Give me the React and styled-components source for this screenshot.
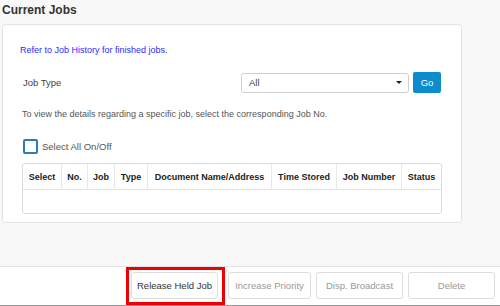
import styled, { createGlobalStyle } from "styled-components";

const GlobalStyle = createGlobalStyle`
  body {
    margin: 0;
    font-family: "Liberation Sans", Arial, sans-serif;
    background: #fff;
  }
`;

const Page = styled.div`
  width: 500px;
  height: 306px;
  display: flex;
  flex-direction: column;
  overflow: hidden;
`;

const Main = styled.div`
  height: 266px;
  background: #f8f8f8;
  padding: 0 0 0 2px;
  box-sizing: border-box;
`;

const Title = styled.h2`
  margin: 0;
  height: 24px;
  padding-top: 3px;
  box-sizing: border-box;
  font-size: 12px;
  font-weight: bold;
  color: #333;
`;

const Card = styled.div`
  width: 460px;
  height: 199px;
  box-sizing: border-box;
  background: #fff;
  border: 1px solid #e4e4e4;
  border-radius: 3px;
  padding: 19px 19px 0 19px;
`;

const HistoryLink = styled.div`
  margin-left: -2px;
  height: 12px;
  line-height: 12px;
  font-size: 9px;
  color: #2a2aff;
`;

const TypeRow = styled.div`
  display: flex;
  align-items: center;
  margin-top: 16px;
  height: 21px;
`;

const Label = styled.div`
  width: 218px;
  font-size: 9.5px;
  color: #444;
  padding-left: 1px;
`;

const Select = styled.div`
  width: 168px;
  height: 20px;
  box-sizing: border-box;
  border: 1px solid #cfcfcf;
  border-radius: 3px;
  display: flex;
  align-items: center;
  justify-content: space-between;
  padding: 0 6px 0 7px;
  font-size: 9.5px;
  color: #444;
`;

const Caret = styled.span`
  width: 0;
  height: 0;
  border-left: 3px solid transparent;
  border-right: 3px solid transparent;
  border-top: 3px solid #222;
`;

const GoButton = styled.button`
  margin-left: 4px;
  width: 28px;
  height: 21px;
  border: 0;
  border-radius: 2px;
  background: #0c8ccc;
  color: #fff;
  font-family: inherit;
  font-size: 9.5px;
  padding: 0;
`;

const Hint = styled.div`
  margin-top: 15px;
  height: 12px;
  line-height: 12px;
  font-size: 9px;
  color: #555;
`;

const CheckRow = styled.label`
  display: flex;
  align-items: center;
  gap: 4px;
  margin-top: 19px;
  margin-left: 1px;
  font-size: 9.5px;
  color: #555;
`;

const Box = styled.span`
  width: 15px;
  height: 15px;
  box-sizing: border-box;
  border: 2px solid #2f79b4;
  border-radius: 2px;
  background: #fff;
`;

const Table = styled.table`
  margin-top: 9px;
  width: 420px;
  border-collapse: separate;
  border-spacing: 0;
  border: 1px solid #dcdcdc;
  border-radius: 3px;
  table-layout: fixed;
`;

const Th = styled.th`
  height: 25px;
  padding: 0;
  font-size: 9px;
  font-weight: bold;
  color: #222;
  text-align: center;
  border-bottom: 1px solid #e4e4e4;
  border-left: ${(p) => (p.$first ? "0" : "1px solid #e8e8e8")};
  white-space: nowrap;
`;

const Td = styled.td`
  height: 23px;
  padding: 0;
`;

const Footer = styled.div`
  height: 40px;
  box-sizing: border-box;
  border-top: 1px solid #e2e2e2;
  border-bottom: 1px solid #9a9a9a;
  background: #fff;
  display: flex;
  align-items: flex-start;
  justify-content: flex-end;
  gap: 5px;
  padding-right: 5px;
`;

const Highlight = styled.div`
  height: 38px;
  box-sizing: border-box;
  border: 3px solid #f00000;
  padding: 2px 4px 0 2px;
  margin-right: -2px;
`;

const FooterButton = styled.button`
  margin-top: ${(p) => (p.$inBox ? "0" : "5px")};
  width: ${(p) => p.$w}px;
  height: 27px;
  box-sizing: border-box;
  background: #fff;
  border: 1px solid #dedede;
  border-radius: 3px;
  font-family: inherit;
  font-size: 9.5px;
  color: ${(p) => (p.disabled ? "#999" : "#333")};
  padding: 0;
`;

const columns = [
  ["Select", 38],
  ["No.", 26],
  ["Job", 27],
  ["Type", 33],
  ["Document Name/Address", 124],
  ["Time Stored", 65],
  ["Job Number", 65],
  ["Status", 40],
];

export default function App() {
  return (
    <Page>
      <GlobalStyle />
      <Main>
        <Title>Current Jobs</Title>
        <Card>
          <HistoryLink>Refer to Job History for finished jobs.</HistoryLink>
          <TypeRow>
            <Label>Job Type</Label>
            <Select>
              <span>All</span>
              <Caret />
            </Select>
            <GoButton>Go</GoButton>
          </TypeRow>
          <Hint>
            To view the details regarding a specific job, select the
            corresponding Job No.
          </Hint>
          <CheckRow>
            <Box />
            Select All On/Off
          </CheckRow>
          <Table>
            <colgroup>
              {columns.map(([name, w]) => (
                <col key={name} style={{ width: w }} />
              ))}
            </colgroup>
            <thead>
              <tr>
                {columns.map(([name], i) => (
                  <Th key={name} $first={i === 0}>
                    {name}
                  </Th>
                ))}
              </tr>
            </thead>
            <tbody>
              <tr>
                <Td colSpan={8} />
              </tr>
            </tbody>
          </Table>
        </Card>
      </Main>
      <Footer>
        <Highlight>
          <FooterButton $inBox $w={87}>
            Release Held Job
          </FooterButton>
        </Highlight>
        <FooterButton disabled $w={83}>
          Increase Priority
        </FooterButton>
        <FooterButton disabled $w={87}>
          Disp. Broadcast
        </FooterButton>
        <FooterButton disabled $w={87}>
          Delete
        </FooterButton>
      </Footer>
    </Page>
  );
}
